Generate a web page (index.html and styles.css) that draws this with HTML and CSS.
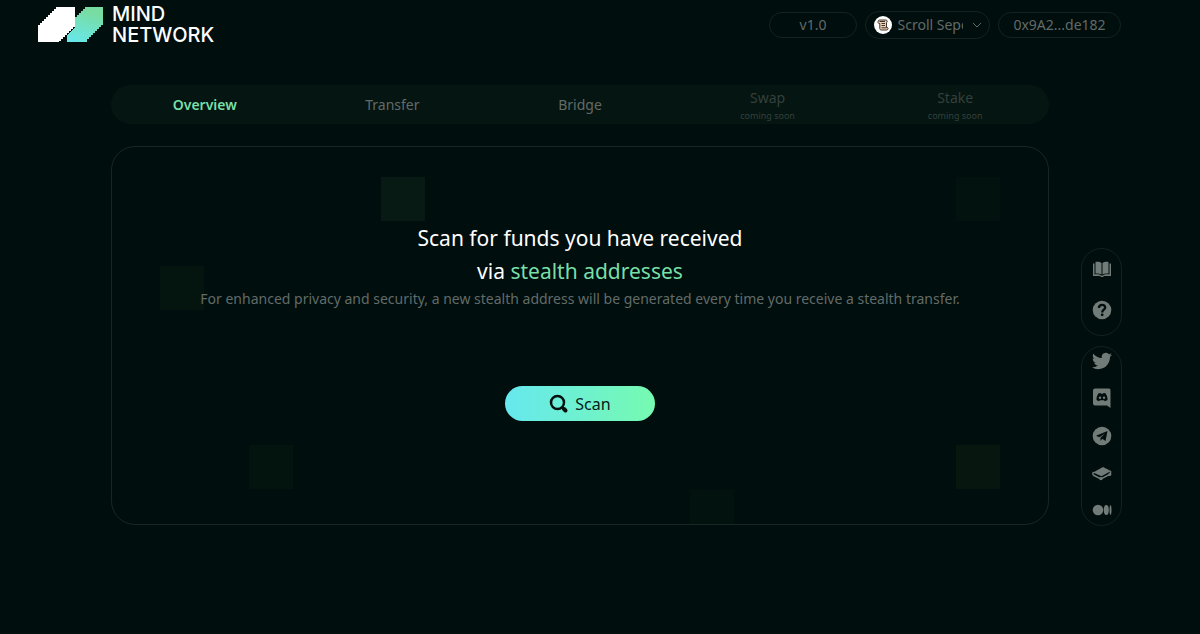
FILE: index.html
```html
<!DOCTYPE html>
<html lang="en">
<head>
  <meta charset="utf-8" />
  <meta name="viewport" content="width=device-width, initial-scale=1" />
  <title>Mind Network</title>
  <link rel="stylesheet" href="styles.css">
</head>
<body>
  <header class="header">
    <a href="#" class="logo">
      <svg width="66" height="36" viewBox="0 0 66 36" shape-rendering="crispEdges" aria-hidden="true">
        <defs>
          <linearGradient id="mark" x1="0" y1="1" x2="0.3" y2="0">
            <stop offset="0" stop-color="#67e8ee" />
            <stop offset="1" stop-color="#78dca0" />
          </linearGradient>
        </defs>
        <path fill="url(#mark)" d="M47 0H65V18H63V20H61V22H59V24H57V26H55V28H53V30H51V32H49V35H29V28L37 20V10H39V8H41V6H43V4H45V2H47Z" />
        <path fill="#fff" d="M18 0H37V20H35V22H33V24H31V26H29V28H27V30H25V32H23V34H21V35H0V18H2V16H4V14H6V12H8V10H10V8H12V6H14V4H16V2H18Z" />
      </svg>
      <span class="logo-text">MIND<br>NETWORK</span>
    </a>
    <div class="chips">
      <span class="chip version">v1.0</span>
      <label class="chip network">
        <svg width="18" height="18" viewBox="0 0 18 18" aria-hidden="true">
          <circle cx="9" cy="9" r="9" fill="#fff" />
          <path fill="#ead2b8" stroke="#423229" stroke-width="1" stroke-linejoin="round" d="M5.500 4H12C13.500 4 13.500 6.500 12.500 6.500V11.500H13.500C14.500 12 14 14 12.800 14H7.500C6 14 5.800 13 5.800 12V7.500H4.800C3.500 7 3.800 4 5.500 4Z" />
          <path fill="none" stroke="#423229" stroke-width="1" d="M5.500 5.500H11M7.500 7.500H11M7.500 9.500H11M7.500 11.800H12.500" />
        </svg>
        <select class="network-select" aria-label="Network">
          <option>Scroll Sepolia</option>
        </select>
        <svg width="10" height="6" viewBox="0 0 10 6" aria-hidden="true">
          <path fill="none" stroke="#626b68" d="M1 1L5 5L9 1" />
        </svg>
      </label>
      <button class="chip account">0x9A2...de182</button>
    </div>
  </header>

  <div class="content">
    <main class="main">
      <nav class="tabs">
        <a href="#" class="tab active">Overview</a>
        <a href="#" class="tab">Transfer</a>
        <a href="#" class="tab">Bridge</a>
        <a href="#" class="tab disabled">Swap<small>coming soon</small></a>
        <a href="#" class="tab disabled">Stake<small>coming soon</small></a>
      </nav>

      <section class="panel">
        <i class="square s1"></i>
        <i class="square s2"></i>
        <i class="square s3"></i>
        <i class="square s4"></i>
        <i class="square s5"></i>
        <i class="square s6"></i>
        <h1>Scan for funds you have received<br>via <span class="green">stealth addresses</span></h1>
        <p class="note">For enhanced privacy and security, a new stealth address will be generated every time you receive a stealth transfer.</p>
        <button class="btn">
          <svg width="20" height="20" viewBox="0 0 20 20" fill="none" stroke="#04110d" aria-hidden="true">
            <circle cx="8.500" cy="8.500" r="6.500" stroke-width="2.500" />
            <path stroke-width="4" stroke-linecap="round" d="M15 15L16.500 16.500" />
            <path stroke-width="2.500" d="M13 13L15 15" />
          </svg>
          Scan
        </button>
      </section>
    </main>

    <aside class="side">
      <div class="side-group docs">
        <a href="#" aria-label="Docs">
          <svg width="20" height="20" viewBox="0 0 20 20">
            <path d="M3.500 3C6 2.600 8.200 3 9.500 4V15.500C8 14.500 6 14.200 3.500 14.500ZM16.500 3C14 2.600 11.800 3 10.500 4V15.500C12 14.500 14 14.200 16.500 14.500Z" />
            <path d="M1 4.500H2.500V15.500C5.500 15.100 8 15.500 9 16.500H11C12 15.500 14.500 15.100 17.500 15.500V4.500H19V17H12L11 18H9L8 17H1Z" />
          </svg>
        </a>
        <a href="#" aria-label="Help">
          <svg width="20" height="20" viewBox="0 0 20 20">
            <circle cx="10" cy="10" r="9.300" />
            <path fill="none" stroke="#000e0d" stroke-width="2.300" d="M6.900 8C6.900 3.800 13.200 3.900 13.200 7.500C13.200 9.700 10.200 9.700 10.200 12.400" />
            <circle cx="10.200" cy="14.800" r="1.400" fill="#000e0d" />
          </svg>
        </a>
      </div>
      <div class="side-group social">
        <a href="#" aria-label="Twitter">
          <svg width="20" height="20" viewBox="0 0 24 24">
            <path d="M23.953 4.570a10 10 0 01-2.825.775 4.958 4.958 0 002.163-2.723c-.951.555-2.005.959-3.127 1.184a4.920 4.920 0 00-8.384 4.482C7.690 8.095 4.067 6.130 1.640 3.162a4.822 4.822 0 00-.666 2.475c0 1.710.870 3.213 2.188 4.096a4.904 4.904 0 01-2.228-.616v.060a4.923 4.923 0 003.946 4.827 4.996 4.996 0 01-2.212.085 4.936 4.936 0 004.604 3.417 9.867 9.867 0 01-6.102 2.105c-.390 0-.779-.023-1.170-.067a13.995 13.995 0 007.557 2.209c9.053 0 13.998-7.496 13.998-13.985 0-.210 0-.420-.015-.630A9.935 9.935 0 0024 4.590z" />
          </svg>
        </a>
        <a href="#" aria-label="Discord">
          <svg width="20" height="20" viewBox="0 0 20 20">
            <path d="M3 0.500H17Q18.500 0.500 18.500 2.500V20L15 17.500H3Q1 17.500 1 15.500V2.500Q1 0.500 3 0.500Z" />
            <path fill="#000e0d" d="M6.500 5.300L8.500 5L9 5.700H11L11.500 5L13.500 5.300C15 7.500 15.600 9.500 15.500 12L13 13.300L12 12.200H8L7 13.300L4.500 12C4.400 9.500 5 7.500 6.500 5.300Z" />
            <circle cx="8" cy="9.700" r="1.200" />
            <circle cx="12" cy="9.700" r="1.200" />
          </svg>
        </a>
        <a href="#" aria-label="Telegram">
          <svg width="20" height="20" viewBox="0 0 20 20">
            <circle cx="10" cy="10" r="9.300" />
            <path fill="#000e0d" d="M15.500 5L4 9.800L7.300 11.200L13 7.500L8.500 11.800V15L10.200 12.800L13.500 15Z" />
          </svg>
        </a>
        <a href="#" aria-label="GitBook">
          <svg width="20" height="20" viewBox="0 0 20 20">
            <path d="M1 9.500L11 4L19 8L9.500 13.200Z" />
            <path fill="none" stroke="#717b78" stroke-width="1.500" d="M1.500 9Q0 11.500 2 12.500L9 16L18.500 11V8" />
            <circle cx="9" cy="15.600" r="1.700" />
            <circle cx="17.700" cy="11.500" r="1.500" />
          </svg>
        </a>
        <a href="#" aria-label="Medium">
          <svg width="20" height="20" viewBox="0 0 20 20">
            <circle cx="6" cy="10" r="5.300" />
            <ellipse cx="14.300" cy="10" rx="2.500" ry="5" />
            <ellipse cx="18.500" cy="10" rx="1" ry="4.700" />
          </svg>
        </a>
      </div>
    </aside>
  </div>
</body>
</html>
```
FILE: styles.css
```css
* {
  box-sizing: border-box;
}
body {
  margin: 0;
  font-family: "Noto Sans", sans-serif;
  font-size: 14px;
  background: #000e0d;
  color: #626b68;
}
a {
  color: inherit;
  text-decoration: none;
}
button, select {
  font: inherit;
  color: inherit;
  background: none;
  border: none;
  padding: 0;
}
.header {
  display: flex;
  justify-content: space-between;
  align-items: center;
  height: 49px;
  padding: 0 79px 0 38px;
}
.logo {
  display: flex;
  align-items: center;
  gap: 8px;
  color: #fff;
}
.logo-text {
  font-family: Inter, sans-serif;
  font-size: 20px;
  font-weight: 500;
  line-height: 21px;
}
.chips {
  display: flex;
  align-items: center;
  gap: 8px;
}
.chip {
  display: flex;
  align-items: center;
  justify-content: center;
  height: 26px;
  border: 1px solid #16221f;
  border-radius: 14px;
}
.version {
  width: 88px;
}
.network {
  width: 125px;
  height: 28px;
  gap: 6px;
}
.network-select {
  appearance: none;
  width: 68px;
  padding-right: 3px;
  overflow: hidden;
}
.account {
  width: 123px;
}
.content {
  display: flex;
  gap: 32px;
  padding: 36px 78px 0 111px;
}
.main {
  flex: 1;
}
.tabs {
  display: flex;
  height: 39px;
  border-radius: 20px;
  background: #051511;
}
.tab {
  flex: 1;
  display: flex;
  flex-direction: column;
  align-items: center;
  justify-content: center;
  line-height: 18px;
}
.active {
  color: #78dfa8;
  font-weight: 600;
}
.disabled {
  padding-top: 5px;
  color: #34403c;
}
.tab small {
  font-size: 9px;
}
.panel {
  position: relative;
  overflow: hidden;
  margin-top: 22px;
  padding: 75px 24px 103px;
  border: 1px solid #1b2623;
  border-radius: 24px;
  text-align: center;
}
.square {
  position: absolute;
  width: 44px;
  height: 44px;
  background: #041510;
}
.s1 { left: 28.7%; top: 30px; background: #081a14; }
.s2 { left: 90.2%; top: 30px; background: #02120f; }
.s3 { left: 5.1%; top: 119px; }
.s4 { left: 14.6%; top: 298px; background: #03130e; }
.s5 { left: 90.2%; top: 298px; background: #071710; }
.s6 { left: 61.8%; top: 343px; background: #02120e; }
h1 {
  position: relative;
  margin: 0;
  color: #fff;
  font-size: 21px;
  font-weight: 400;
  line-height: 33px;
}
.green {
  color: #78dfa8;
}
.note {
  position: relative;
  margin: 0 0 76px;
  line-height: 22px;
}
.btn {
  display: flex;
  align-items: center;
  justify-content: center;
  gap: 6px;
  width: 150px;
  height: 35px;
  margin: 0 auto;
  border-radius: 18px;
  background: linear-gradient(90deg, #66e8ee, #76fab0);
  color: #04201a;
  font-size: 16px;
  cursor: pointer;
}
.side {
  width: 41px;
  padding-top: 163px;
}
.side-group {
  display: flex;
  flex-direction: column;
  align-items: center;
  justify-content: space-between;
  border: 1px solid #16221f;
  border-radius: 21px;
}
.side-group svg {
  display: block;
  fill: #717b78;
}
.docs {
  height: 88px;
  padding: 10px 0 15px;
}
.social {
  height: 180px;
  margin-top: 10px;
  padding: 4px 0 5px;
}
```
